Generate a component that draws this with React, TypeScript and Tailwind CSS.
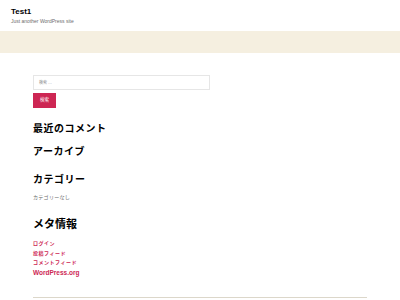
import React from 'react';

const jp = { fontFamily: '"Liberation Sans", "Noto Sans CJK JP", sans-serif' };

const Widget = ({ title, className, children }: { title: string; className?: string; children?: React.ReactNode }) => (
  <section className={className}>
    <h2 className="text-[10px] font-bold leading-[12px] text-black tracking-[0.5px]">{title}</h2>
    {children}
  </section>
);

const App = () => {
  const links = ['ログイン', '投稿フィード', 'コメントフィード'];

  return (
    <div className="w-[400px] h-[300px] overflow-hidden bg-white" style={jp}>
      <header className="pl-[11px] pt-[7px] h-[31px]">
        <div className="text-[8px] font-bold leading-[10px] text-black">Test1</div>
        <div className="text-[5px] leading-[7px] text-[#6d6d6d] mt-[1px]">Just another WordPress site</div>
      </header>
      <div className="h-[22px] bg-[#f5efe0]" />

      <main className="ml-[33px] w-[334px] pt-[22px]">
        <form className="flex flex-col gap-[3px]">
          <div className="w-[177px] h-[15px] border border-[#e6e6e6] flex items-center pl-[5px]">
            <span className="text-[4px] text-[#8a8a8a]">検索 …</span>
          </div>
          <button
            type="button"
            className="w-[23px] h-[15px] bg-[#cd2653] text-white text-[4.5px] flex items-center justify-center"
          >
            検索
          </button>
        </form>

        <Widget title="最近のコメント" className="mt-[15px]" />
        <Widget title="アーカイブ" className="mt-[11px]" />
        <Widget title="カテゴリー" className="mt-[16px]">
          <p className="mt-[8px] text-[5px] leading-[7px] text-[#6d6d6d] tracking-[0.3px]">カテゴリーなし</p>
        </Widget>

        <section className="mt-[17px]">
          <h2 className="text-[11px] font-bold leading-[13px] text-black">メタ情報</h2>
          <ul className="mt-[9px] flex flex-col gap-[3px]">
            {links.map((l) => (
              <li key={l} className="text-[5px] font-bold leading-[6.5px] text-[#cd2653] tracking-[0.5px]">
                {l}
              </li>
            ))}
            <li className="text-[6.5px] font-bold leading-[8px] text-[#cd2653]">WordPress.org</li>
          </ul>
        </section>

        <hr className="mt-[20px] border-t border-[#dcd7ca]" />
      </main>
    </div>
  );
};

export default App;
